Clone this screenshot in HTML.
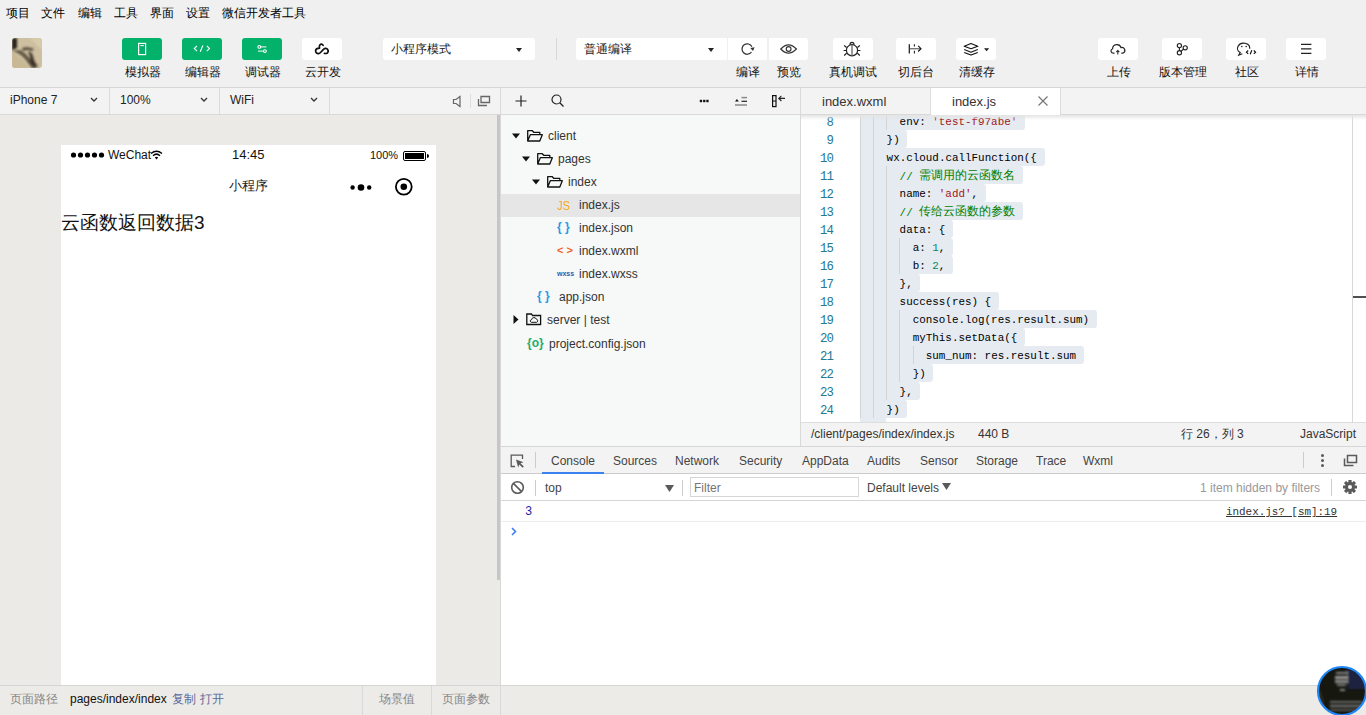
<!DOCTYPE html>
<html><head><meta charset="utf-8">
<style>
*{margin:0;padding:0;box-sizing:border-box}
html,body{width:1366px;height:715px;overflow:hidden;background:#f0f0f0;font-family:"Liberation Sans",sans-serif;color:#222;font-size:12px}
.a{position:absolute}
.t{position:absolute;white-space:nowrap;line-height:1}
/* menu */
#menu .t{top:7px;font-size:12px;color:#000}
/* toolbar */
.btn{position:absolute;top:38px;width:40px;height:22px;border-radius:3px;background:#fff}
.btn.g{background:#02b16a}
.lbl{position:absolute;top:66px;margin-left:1px;font-size:12px;color:#111;white-space:nowrap;line-height:12px;transform:translateX(-50%)}
.sel{position:absolute;top:38px;height:22px;background:#fff;border-radius:3px}
.sel .t{top:5px;left:8px;font-size:12px}
.caret{position:absolute;width:0;height:0;border-left:3px solid transparent;border-right:3px solid transparent;border-top:4px solid #222}
svg{position:absolute;overflow:visible}
</style></head><body>

<!-- MENU -->
<div id="menu">
<span class="t" style="left:6px">项目</span>
<span class="t" style="left:41px">文件</span>
<span class="t" style="left:78px">编辑</span>
<span class="t" style="left:114px">工具</span>
<span class="t" style="left:150px">界面</span>
<span class="t" style="left:186px">设置</span>
<span class="t" style="left:222px">微信开发者工具</span>
</div>

<!-- TOOLBAR -->
<svg style="left:12px;top:38px" width="30" height="30"><defs><clipPath id="avc"><rect width="30" height="30" rx="3"/></clipPath><filter id="bl" x="-50%" y="-50%" width="200%" height="200%"><feGaussianBlur stdDeviation="1.1"/></filter></defs><g clip-path="url(#avc)"><rect width="30" height="30" fill="#cdbf9f"/><g filter="url(#bl)"><path d="M0 0H5V10L0 12Z" fill="#2a241a"/><path d="M0 13Q8 15 13 21Q18 28 20 30H25Q22 26 19 22Q14 15 8 12Z" fill="#4a4030" opacity="0.8"/><path d="M10 10Q16 8 22 11L20 13Q15 11 11 13Z" fill="#3a3024" opacity="0.8"/><path d="M16 14Q19 18 18 24L22 29L26 28Q22 24 21 18Q19 13 16 14Z" fill="#2a2218" opacity="0.85"/><path d="M0 15Q9 19 17 30H0Z" fill="#c8b894"/><path d="M18 0H30V12Q24 6 18 0Z" fill="#ddd2b4" opacity="0.7"/></g></g></svg>

<div class="btn g" style="left:122px"></div>
<div class="btn g" style="left:182px"></div>
<div class="btn g" style="left:242px"></div>
<div class="btn" style="left:302px"></div>
<span class="lbl" style="left:142px">模拟器</span>
<span class="lbl" style="left:202px">编辑器</span>
<span class="lbl" style="left:262px">调试器</span>
<span class="lbl" style="left:322px">云开发</span>

<div class="sel" style="left:383px;width:152px"><span class="t">小程序模式</span><i class="caret" style="left:133px;top:10px"></i></div>
<div class="a" style="left:556px;top:38px;width:1px;height:22px;background:#d8d8d8"></div>
<div class="sel" style="left:576px;width:151px;border-radius:3px 0 0 3px"><span class="t">普通编译</span><i class="caret" style="left:132px;top:10px"></i></div>
<div class="btn" style="left:728px;width:39px;border-radius:0"></div>
<div class="btn" style="left:769px;width:39px;border-radius:0 3px 3px 0"></div>
<span class="lbl" style="left:747px">编译</span>
<span class="lbl" style="left:788px">预览</span>
<div class="btn" style="left:833px"></div>
<div class="btn" style="left:896px"></div>
<div class="btn" style="left:956px"></div>
<span class="lbl" style="left:852px">真机调试</span>
<span class="lbl" style="left:915px">切后台</span>
<span class="lbl" style="left:976px">清缓存</span>

<div class="btn" style="left:1098px"></div>
<div class="btn" style="left:1162px"></div>
<div class="btn" style="left:1226px"></div>
<div class="btn" style="left:1286px"></div>
<span class="lbl" style="left:1118px">上传</span>
<span class="lbl" style="left:1182px">版本管理</span>
<span class="lbl" style="left:1246px">社区</span>
<span class="lbl" style="left:1306px">详情</span>

<div class="a" style="left:0;top:87px;width:1366px;height:1px;background:#d6d6d6"></div>
<svg style="left:0;top:0" width="1366" height="88">
<g fill="none" stroke="#fff" stroke-width="1.2">
<rect x="138.6" y="43.4" width="7" height="11.2"/>
<path d="M140.3 45.6H143.9" stroke-width="1"/>
<path d="M197 45.9L194.3 48.5L197 51.1 M202.9 45.4L200.2 51.7 M206.8 45.9L209.5 48.5L206.8 51.1" stroke-width="1.15"/>
<path d="M260.5 46.9H266.4 M258 51.1H263.5" stroke-width="1.3" stroke-opacity="0.8"/>
<circle cx="259.3" cy="46.9" r="1.4" stroke-width="1.1"/><circle cx="264.9" cy="51.1" r="1.4" stroke-width="1.1"/>
</g>
<path d="M323.1 45.3Q321.5 43.2 319.8 45Q319 46.2 319.5 48.2Q316 48.2 315.6 50.7Q315.8 53.8 318.6 53.6Q319.8 53.4 321 52L323.5 49.3Q325.5 47.5 327.5 49.2Q329 51 327.5 52.8Q326.5 53.8 324.4 53.4" fill="none" stroke="#111" stroke-width="1.7" stroke-linecap="round" stroke-linejoin="round"/>
<g fill="none" stroke="#333" stroke-width="1.2">
<path d="M751.5 52A5.2 5.2 0 1 1 751.9 46.8" stroke-width="1.25"/>
</g>
<path d="M750.3 47.9L754.6 47.3L753 50.9Z" fill="#333"/>
<g fill="none" stroke="#333" stroke-width="1.2">
<path d="M780.8 49Q788.5 40.8 796.4 49Q788.5 57.2 780.8 49Z"/>
<circle cx="788.6" cy="49" r="2.4" stroke-width="1.15"/>
</g>
<g fill="none" stroke="#222" stroke-width="1.2">
<ellipse cx="852" cy="50.3" rx="5.6" ry="5.6"/>
<path d="M850 44.8Q850 42.3 852 42.3Q854 42.3 854 44.8" />
<path d="M852 45V55.8" stroke="#666" stroke-width="1.3"/>
<path d="M846.6 47.5L844.2 45.5 M846.4 50.5H843.6 M846.6 53.2L844.2 55.5 M857.4 47.5L859.8 45.5 M857.6 50.5H860.4 M857.4 53.2L859.8 55.5"/>
</g>
<path d="M909.3 44.2V53.6" stroke="#111" stroke-width="1.2"/>
<path d="M914.4 44.2V46.6M914.4 50.8V53.6" stroke="#222" stroke-width="1.1"/>
<path d="M909.8 48.7H920.3" stroke="#777" stroke-width="1.4"/>
<path d="M918.2 45.9L921 48.7L918.2 51.5" fill="none" stroke="#111" stroke-width="1.1"/>
<g fill="none" stroke="#111" stroke-width="1.1" stroke-linejoin="round">
<path d="M964.2 46.2L971 43.6L977.8 46.2L971 48.8Z"/>
<path d="M964.2 49.6L971 52.2L977.8 49.6"/>
<path d="M964.2 52.5L971 55.1L977.8 52.5"/>
</g>
<path d="M984 48.3H989.2L986.6 51.3Z" fill="#222"/>
<g fill="none" stroke="#222" stroke-width="1.4">
<path d="M1114.5 53.2H1113.2A2.3 2.3 0 0 1 1112.6 48.7A4.3 4.3 0 0 1 1121 47.6A2.9 2.9 0 0 1 1122.8 53.2H1121.3" stroke-width="1.2"/>
</g>
<path d="M1117.8 54.5V50.6M1116.3 52L1117.8 50.5L1119.3 52" fill="none" stroke="#333" stroke-width="1.1"/>
<g fill="none" stroke="#222" stroke-width="1.15">
<circle cx="1179.4" cy="45.6" r="2.1"/><circle cx="1179.4" cy="52.7" r="2.1"/><circle cx="1185.2" cy="47.8" r="2.1"/>
<path d="M1179.4 47.7V50.6 M1183.5 49.3L1180.9 51.3"/>
</g>
<g fill="none" stroke="#222" stroke-width="1.2">
<path d="M1249.7 48.7A6.1 5.2 0 1 0 1240.2 52.6L1238.8 55.2L1242.3 53.8"/>
</g>
<circle cx="1241.8" cy="46.5" r="0.8" fill="#222"/><circle cx="1246.2" cy="46.5" r="0.8" fill="#222"/>
<path d="M1248.2 50.5L1246.4 52.2L1248.2 53.9 M1251.8 50.2L1250.2 54.2 M1253.8 50.5L1255.6 52.2L1253.8 53.9" fill="none" stroke="#111" stroke-width="1.15"/>
<path d="M1301 44.3H1311.4M1301 48.8H1311.4M1301 53.4H1311.4" stroke="#222" stroke-width="1.3"/>
</svg>

<!-- ROW2 -->
<div class="a" style="left:0;top:88px;width:1366px;height:26px;background:#f3f3f3"></div>
<div class="a" style="left:0;top:114px;width:1366px;height:1px;background:#d9d9d9"></div>
<span class="t" style="left:10px;top:94px;font-size:12px">iPhone 7</span>
<span class="t" style="left:120px;top:94px;font-size:12px">100%</span>
<span class="t" style="left:230px;top:94px;font-size:12px">WiFi</span>
<svg style="left:90px;top:97px" width="8" height="5"><path d="M1 1L4 4L7 1" fill="none" stroke="#333" stroke-width="1.3"/></svg>
<svg style="left:200px;top:97px" width="8" height="5"><path d="M1 1L4 4L7 1" fill="none" stroke="#333" stroke-width="1.3"/></svg>
<svg style="left:310px;top:97px" width="8" height="5"><path d="M1 1L4 4L7 1" fill="none" stroke="#333" stroke-width="1.3"/></svg>
<div class="a" style="left:109px;top:88px;width:1px;height:26px;background:#dcdcdc"></div>
<div class="a" style="left:219px;top:88px;width:1px;height:26px;background:#dcdcdc"></div>
<div class="a" style="left:329px;top:88px;width:1px;height:26px;background:#dcdcdc"></div>
<svg style="left:452px;top:95px" width="10" height="13"><path d="M1.5 4.5H4L8 1.5V11.5L4 8.5H1.5Z" fill="none" stroke="#666" stroke-width="1.2"/></svg>
<div class="a" style="left:470px;top:94px;width:1px;height:14px;background:#ddd"></div>
<svg style="left:477px;top:95px" width="14" height="12"><path d="M4 1.5H12.5V7.5H4Z M1.5 4V10.5H10" fill="none" stroke="#666" stroke-width="1.3"/></svg>
<div class="a" style="left:500px;top:88px;width:1px;height:627px;background:#d9d9d9"></div>

<!-- SIMULATOR -->
<div class="a" style="left:0;top:115px;width:500px;height:570px;background:#ebeae7"></div>
<div class="a" style="left:497px;top:115px;width:3px;height:465px;background:#c6c6c6"></div>
<div class="a" style="left:61px;top:145px;width:375px;height:540px;background:#fff"></div>
<!-- status bar -->
<svg style="left:70px;top:151px" width="36" height="8"><circle cx="3.5" cy="4" r="2.6" fill="#000"/><circle cx="10.5" cy="4" r="2.6" fill="#000"/><circle cx="17.5" cy="4" r="2.6" fill="#000"/><circle cx="24.5" cy="4" r="2.6" fill="#000"/><circle cx="31.5" cy="4" r="2.6" fill="#000"/></svg>
<span class="t" style="left:108px;top:149px;font-size:12px;color:#111">WeChat</span>
<svg style="left:150px;top:150px" width="13" height="10"><path d="M1 3.5Q6.5 -1 12 3.5" fill="none" stroke="#000" stroke-width="1.5"/><path d="M3 5.7Q6.5 2.5 10 5.7" fill="none" stroke="#000" stroke-width="1.5"/><path d="M4.8 7.5L6.5 9.5L8.2 7.5Q6.5 6 4.8 7.5Z" fill="#000"/></svg>
<span class="t" style="left:232px;top:148px;font-size:13px;color:#111">14:45</span>
<span class="t" style="left:370px;top:150px;font-size:11px;color:#111">100%</span>
<div class="a" style="left:403px;top:151px;width:23px;height:10px;border:1.3px solid #000;border-radius:2px"></div>
<div class="a" style="left:405px;top:153px;width:19px;height:6px;background:#000"></div>
<div class="a" style="left:426.5px;top:153.5px;width:2.5px;height:4px;background:#000;border-radius:0 2px 2px 0"></div>
<!-- nav -->
<span class="t" style="left:229px;top:179px;font-size:13px;color:#222">小程序</span>
<svg style="left:349px;top:182px" width="24" height="11"><circle cx="3.6" cy="5.5" r="2.2" fill="#000"/><circle cx="12" cy="5.5" r="3.3" fill="#000"/><circle cx="20.2" cy="5.5" r="2.2" fill="#000"/></svg>
<svg style="left:394px;top:177px" width="20" height="20"><circle cx="9.8" cy="9.7" r="7.9" fill="none" stroke="#000" stroke-width="1.8"/><circle cx="9.8" cy="9.7" r="3.3" fill="#000"/></svg>
<span class="t" style="left:61px;top:213px;font-size:19px;color:#111">云函数返回数据3</span>

<!-- FILE TREE -->
<div class="a" style="left:501px;top:115px;width:299px;height:331px;background:#f7f8f8"></div>
<svg style="left:515px;top:95px" width="12" height="12"><path d="M6 0.5V11.5M0.5 6H11.5" stroke="#222" stroke-width="1.2"/></svg>
<svg style="left:551px;top:94px" width="13" height="13"><circle cx="5.5" cy="5.5" r="4.5" fill="none" stroke="#222" stroke-width="1.2"/><path d="M8.8 8.8L12.5 12.5" stroke="#222" stroke-width="1.3"/></svg>
<svg style="left:0;top:0" width="800" height="115">
<rect x="699.8" y="99.8" width="2.3" height="2.4" fill="#111"/><rect x="703.1" y="99.8" width="2.3" height="2.4" fill="#111"/><rect x="706.3" y="99.8" width="2.3" height="2.4" fill="#111"/>
<path d="M735 101.4L736.9 99L738.8 101.4Z" fill="#111"/>
<path d="M741.5 97.6H747" stroke="#888" stroke-width="1.5"/>
<path d="M741.5 101.3H747" stroke="#222" stroke-width="1.2"/>
<path d="M735 105H747" stroke="#888" stroke-width="1.5"/>
<rect x="772.6" y="95.6" width="3.4" height="11" fill="none" stroke="#111" stroke-width="1.2"/>
<path d="M772.6 101H776" stroke="#111" stroke-width="1"/>
<path d="M778.8 98.4H785 M781.4 95.8L778.8 98.4L781.4 101" fill="none" stroke="#222" stroke-width="1.1"/>
</svg>
<div class="a" style="left:800px;top:88px;width:1px;height:358px;background:#d9d9d9"></div>

<div class="a" style="left:501px;top:194px;width:299px;height:23px;background:#e6e6e6"></div>
<svg style="left:512px;top:133px" width="8" height="6"><path d="M0 0.5H8L4 5.5Z" fill="#111"/></svg>
<svg style="left:522px;top:156px" width="8" height="6"><path d="M0 0.5H8L4 5.5Z" fill="#111"/></svg>
<svg style="left:532px;top:179px" width="8" height="6"><path d="M0 0.5H8L4 5.5Z" fill="#111"/></svg>
<svg style="left:513px;top:315px" width="6" height="9"><path d="M0.5 0V9L5.5 4.5Z" fill="#111"/></svg>
<svg style="left:527px;top:130px" width="16" height="12"><path d="M0.7 11V0.7H5.3L6.7 2.3H12.8V4.7 M0.7 11L3.3 4.7H15.3L12.8 11Z" fill="none" stroke="#111" stroke-width="1.3" stroke-linejoin="round"/></svg>
<svg style="left:537px;top:153px" width="16" height="12"><path d="M0.7 11V0.7H5.3L6.7 2.3H12.8V4.7 M0.7 11L3.3 4.7H15.3L12.8 11Z" fill="none" stroke="#111" stroke-width="1.3" stroke-linejoin="round"/></svg>
<svg style="left:547px;top:176px" width="16" height="12"><path d="M0.7 11V0.7H5.3L6.7 2.3H12.8V4.7 M0.7 11L3.3 4.7H15.3L12.8 11Z" fill="none" stroke="#111" stroke-width="1.3" stroke-linejoin="round"/></svg>
<svg style="left:526px;top:313px" width="16" height="13"><path d="M0.8 11.5V1H5.5L6.5 2.5H14.6V11.5Z" fill="none" stroke="#111" stroke-width="1.3"/><path d="M5.2 9.3H10.6A1.6 1.6 0 0 0 10.4 6.2A2.5 2.5 0 0 0 5.6 6.6A1.4 1.4 0 0 0 5.2 9.3Z" fill="none" stroke="#111" stroke-width="1"/></svg>

<span class="t" style="left:548px;top:130px;font-size:12px;color:#333">client</span>
<span class="t" style="left:558px;top:153px;font-size:12px;color:#333">pages</span>
<span class="t" style="left:568px;top:176px;font-size:12px;color:#333">index</span>
<span class="t" style="left:557px;top:199px;font-size:13px;color:#f5a623;transform:scaleX(0.85);transform-origin:left">JS</span>
<span class="t" style="left:579px;top:199px;font-size:12px;color:#333">index.js</span>
<span class="t" style="left:557px;top:221px;font-size:12px;color:#1e9ce6;font-weight:bold">{ }</span>
<span class="t" style="left:579px;top:222px;font-size:12px;color:#333">index.json</span>
<span class="t" style="left:557px;top:245px;font-size:11px;color:#f0642a;font-weight:bold">&lt; &gt;</span>
<span class="t" style="left:579px;top:245px;font-size:12px;color:#333">index.wxml</span>
<span class="t" style="left:557px;top:270px;font-size:7px;color:#1a5fb4;font-weight:bold">wxss</span>
<span class="t" style="left:579px;top:268px;font-size:12px;color:#333">index.wxss</span>
<span class="t" style="left:537px;top:290px;font-size:12px;color:#1e9ce6;font-weight:bold">{ }</span>
<span class="t" style="left:559px;top:291px;font-size:12px;color:#333">app.json</span>
<span class="t" style="left:547px;top:314px;font-size:12px;color:#333">server | test</span>
<span class="t" style="left:527px;top:337px;font-size:12px;color:#1aad6a;font-weight:bold">{o}</span>
<span class="t" style="left:549px;top:338px;font-size:12px;color:#333">project.config.json</span>

<!-- EDITOR TABS -->
<div class="a" style="left:801px;top:88px;width:565px;height:26px;background:#f3f3f3"></div>
<div class="a" style="left:931px;top:88px;width:129px;height:27px;background:#fff"></div>
<div class="a" style="left:930px;top:88px;width:1px;height:26px;background:#ddd"></div>
<div class="a" style="left:1060px;top:88px;width:1px;height:26px;background:#ddd"></div>
<span class="t" style="left:822px;top:95px;font-size:13px;color:#333">index.wxml</span>
<span class="t" style="left:952px;top:95px;font-size:13px;color:#333">index.js</span>
<svg style="left:1038px;top:96px" width="10" height="10"><path d="M0.5 0.5L9.5 9.5M9.5 0.5L0.5 9.5" stroke="#777" stroke-width="1.2"/></svg>

<!-- EDITOR BODY -->
<style>
#ed{position:absolute;left:801px;top:115px;width:565px;height:307px;background:#fff;overflow:hidden}
#ed .in{position:absolute;left:-801px;top:-115px;width:1366px;height:715px}
.sel2{position:absolute;left:860px;height:18px;background:#e5ebf1;border-radius:0 3px 3px 0}
.gd{position:absolute;width:1px;height:18px;background:#d3d3d3}
.ln{position:absolute;left:803px;width:30px;text-align:right;font-family:"Liberation Mono",monospace;font-size:12.3px;letter-spacing:-0.9px;line-height:18px;margin-top:1.5px;color:#237893;white-space:nowrap}
.cd{position:absolute;font-family:"Liberation Mono",monospace;font-size:10.9px;line-height:18px;color:#000;white-space:pre}
.cd b{font-weight:normal}
.cd .s{color:#a31515}.cd .n{color:#098658}.cd .c{color:#008000}
.cd .cj{font-size:12px;font-family:"Liberation Sans",sans-serif;position:relative;top:-1px}
</style>
<div id="ed"><div class="in">
<div class="sel2" style="top:112px;width:165.0px"></div>
<div class="sel2" style="top:130px;width:47.3px"></div>
<div class="sel2" style="top:148px;width:184.6px"></div>
<div class="sel2" style="top:166px;width:162.9px"></div>
<div class="sel2" style="top:184px;width:125.8px"></div>
<div class="sel2" style="top:202px;width:162.9px"></div>
<div class="sel2" style="top:220px;width:93.1px"></div>
<div class="sel2" style="top:238px;width:93.1px"></div>
<div class="sel2" style="top:256px;width:93.1px"></div>
<div class="sel2" style="top:274px;width:60.4px"></div>
<div class="sel2" style="top:292px;width:138.8px"></div>
<div class="sel2" style="top:310px;width:236.9px"></div>
<div class="sel2" style="top:328px;width:165.0px"></div>
<div class="sel2" style="top:346px;width:223.9px"></div>
<div class="sel2" style="top:364px;width:73.4px"></div>
<div class="sel2" style="top:382px;width:60.4px"></div>
<div class="sel2" style="top:400px;width:47.3px"></div>
<div class="a" style="left:860px;top:418px;width:26px;height:4px;background:#e5ebf1"></div>
<div class="gd" style="left:860px;top:112px"></div>
<div class="gd" style="left:873px;top:112px"></div>
<div class="gd" style="left:886px;top:112px"></div>
<div class="gd" style="left:860px;top:130px"></div>
<div class="gd" style="left:873px;top:130px"></div>
<div class="gd" style="left:860px;top:148px"></div>
<div class="gd" style="left:873px;top:148px"></div>
<div class="gd" style="left:860px;top:166px"></div>
<div class="gd" style="left:873px;top:166px"></div>
<div class="gd" style="left:886px;top:166px"></div>
<div class="gd" style="left:860px;top:184px"></div>
<div class="gd" style="left:873px;top:184px"></div>
<div class="gd" style="left:886px;top:184px"></div>
<div class="gd" style="left:860px;top:202px"></div>
<div class="gd" style="left:873px;top:202px"></div>
<div class="gd" style="left:886px;top:202px"></div>
<div class="gd" style="left:860px;top:220px"></div>
<div class="gd" style="left:873px;top:220px"></div>
<div class="gd" style="left:886px;top:220px"></div>
<div class="gd" style="left:860px;top:238px"></div>
<div class="gd" style="left:873px;top:238px"></div>
<div class="gd" style="left:886px;top:238px"></div>
<div class="gd" style="left:899px;top:238px"></div>
<div class="gd" style="left:860px;top:256px"></div>
<div class="gd" style="left:873px;top:256px"></div>
<div class="gd" style="left:886px;top:256px"></div>
<div class="gd" style="left:899px;top:256px"></div>
<div class="gd" style="left:860px;top:274px"></div>
<div class="gd" style="left:873px;top:274px"></div>
<div class="gd" style="left:886px;top:274px"></div>
<div class="gd" style="left:860px;top:292px"></div>
<div class="gd" style="left:873px;top:292px"></div>
<div class="gd" style="left:886px;top:292px"></div>
<div class="gd" style="left:860px;top:310px"></div>
<div class="gd" style="left:873px;top:310px"></div>
<div class="gd" style="left:886px;top:310px"></div>
<div class="gd" style="left:899px;top:310px"></div>
<div class="gd" style="left:860px;top:328px"></div>
<div class="gd" style="left:873px;top:328px"></div>
<div class="gd" style="left:886px;top:328px"></div>
<div class="gd" style="left:899px;top:328px"></div>
<div class="gd" style="left:860px;top:346px"></div>
<div class="gd" style="left:873px;top:346px"></div>
<div class="gd" style="left:886px;top:346px"></div>
<div class="gd" style="left:899px;top:346px"></div>
<div class="gd" style="left:913px;top:346px"></div>
<div class="gd" style="left:860px;top:364px"></div>
<div class="gd" style="left:873px;top:364px"></div>
<div class="gd" style="left:886px;top:364px"></div>
<div class="gd" style="left:899px;top:364px"></div>
<div class="gd" style="left:860px;top:382px"></div>
<div class="gd" style="left:873px;top:382px"></div>
<div class="gd" style="left:886px;top:382px"></div>
<div class="gd" style="left:860px;top:400px"></div>
<div class="gd" style="left:873px;top:400px"></div>
<span class="ln" style="top:112px">8</span>
<span class="cd" style="top:113px;left:899.6px">env: <b class="s">'test-f97abe'</b></span>
<span class="ln" style="top:130px">9</span>
<span class="cd" style="top:131px;left:886.6px">})</span>
<span class="ln" style="top:148px">10</span>
<span class="cd" style="top:149px;left:886.6px">wx.cloud.callFunction({</span>
<span class="ln" style="top:166px">11</span>
<span class="cd" style="top:167px;left:899.6px"><b class="c">// </b><b class="c cj">需调用的云函数名</b></span>
<span class="ln" style="top:184px">12</span>
<span class="cd" style="top:185px;left:899.6px">name: <b class="s">'add'</b>,</span>
<span class="ln" style="top:202px">13</span>
<span class="cd" style="top:203px;left:899.6px"><b class="c">// </b><b class="c cj">传给云函数的参数</b></span>
<span class="ln" style="top:220px">14</span>
<span class="cd" style="top:221px;left:899.6px">data: {</span>
<span class="ln" style="top:238px">15</span>
<span class="cd" style="top:239px;left:912.7px">a: <b class="n">1</b>,</span>
<span class="ln" style="top:256px">16</span>
<span class="cd" style="top:257px;left:912.7px">b: <b class="n">2</b>,</span>
<span class="ln" style="top:274px">17</span>
<span class="cd" style="top:275px;left:899.6px">},</span>
<span class="ln" style="top:292px">18</span>
<span class="cd" style="top:293px;left:899.6px">success(res) {</span>
<span class="ln" style="top:310px">19</span>
<span class="cd" style="top:311px;left:912.7px">console.log(res.result.sum)</span>
<span class="ln" style="top:328px">20</span>
<span class="cd" style="top:329px;left:912.7px">myThis.setData({</span>
<span class="ln" style="top:346px">21</span>
<span class="cd" style="top:347px;left:925.8px">sum_num: res.result.sum</span>
<span class="ln" style="top:364px">22</span>
<span class="cd" style="top:365px;left:912.7px">})</span>
<span class="ln" style="top:382px">23</span>
<span class="cd" style="top:383px;left:899.6px">},</span>
<span class="ln" style="top:400px">24</span>
<span class="cd" style="top:401px;left:886.6px">})</span>

</div>
<div class="a" style="left:551px;top:0;width:1px;height:307px;background:#d8d8d8"></div>
<div class="a" style="left:552px;top:181px;width:13px;height:2px;background:#505050"></div>
<div class="a" style="left:0;top:0;width:565px;height:5px;background:linear-gradient(#e4e4e4,rgba(255,255,255,0))"></div>
</div>
<!-- EDITOR STATUS -->
<div class="a" style="left:801px;top:422px;width:565px;height:24px;background:#f3f3f3;border-top:1px solid #dedede"></div>
<span class="t" style="left:811px;top:428px;font-size:12px;color:#333">/client/pages/index/index.js</span>
<span class="t" style="left:978px;top:428px;font-size:12px;color:#333">440 B</span>
<span class="t" style="left:1181px;top:428px;font-size:12px;color:#333">行 26，列 3</span>
<span class="t" style="left:1300px;top:428px;font-size:12px;color:#333">JavaScript</span>
<div class="a" style="left:501px;top:446px;width:865px;height:1px;background:#d6d6d6"></div>

<!-- DEVTOOLS -->
<div class="a" style="left:501px;top:447px;width:865px;height:26px;background:#f3f3f3"></div>
<div class="a" style="left:501px;top:473px;width:865px;height:1px;background:#cccccc"></div>
<div class="a" style="left:501px;top:474px;width:865px;height:241px;background:#fff"></div>
<svg style="left:510px;top:454px" width="15" height="14"><path d="M5 12.5H1.2V1.2H12.5V5" fill="none" stroke="#5a5a5a" stroke-width="1.3"/><path d="M6 5.5L13.5 8.2L10.5 9.3L13.8 12.6L12.6 13.8L9.3 10.5L8.2 13.5Z" fill="#5a5a5a"/></svg>
<div class="a" style="left:535px;top:452px;width:1px;height:16px;background:#ccc"></div>
<span class="t dt" style="left:551px">Console</span>
<div class="a" style="left:542px;top:472px;width:62px;height:2px;background:#3b82f0"></div>
<span class="t dt" style="left:613px">Sources</span>
<span class="t dt" style="left:675px">Network</span>
<span class="t dt" style="left:739px">Security</span>
<span class="t dt" style="left:802px">AppData</span>
<span class="t dt" style="left:867px">Audits</span>
<span class="t dt" style="left:920px">Sensor</span>
<span class="t dt" style="left:976px">Storage</span>
<span class="t dt" style="left:1036px">Trace</span>
<span class="t dt" style="left:1083px">Wxml</span>
<div class="a" style="left:1303px;top:452px;width:1px;height:16px;background:#ccc"></div>
<svg style="left:1320px;top:453px" width="5" height="15"><circle cx="2.5" cy="2.5" r="1.5" fill="#5a5a5a"/><circle cx="2.5" cy="7.5" r="1.5" fill="#5a5a5a"/><circle cx="2.5" cy="12.5" r="1.5" fill="#5a5a5a"/></svg>
<svg style="left:1343px;top:454px" width="15" height="13"><path d="M4.5 1.5H13.5V8.5H4.5Z M1.5 4.5V11.5H10.5" fill="none" stroke="#5a5a5a" stroke-width="1.5"/></svg>

<svg style="left:510px;top:480px" width="15" height="15"><circle cx="7.5" cy="7.5" r="5.8" fill="none" stroke="#5a5a5a" stroke-width="1.6"/><path d="M3.4 3.4L11.6 11.6" stroke="#5a5a5a" stroke-width="1.6"/></svg>
<div class="a" style="left:535px;top:480px;width:1px;height:16px;background:#ccc"></div>
<span class="t dt" style="left:545px;top:482px">top</span>
<svg style="left:665px;top:485px" width="9" height="7"><path d="M0 0H9L4.5 7Z" fill="#5a5a5a"/></svg>
<div class="a" style="left:682px;top:480px;width:1px;height:16px;background:#ccc"></div>
<div class="a" style="left:690px;top:477px;width:169px;height:20px;border:1px solid #d6d6d6"></div>
<span class="t dt" style="left:694px;top:482px;color:#757575">Filter</span>
<span class="t dt" style="left:867px;top:482px">Default levels</span>
<svg style="left:942px;top:483px" width="9" height="7"><path d="M0 0H9L4.5 7Z" fill="#5a5a5a"/></svg>
<span class="t dt" style="left:1200px;top:482px;color:#999">1 item hidden by filters</span>
<div class="a" style="left:1331px;top:479px;width:1px;height:17px;background:#ccc"></div>
<svg style="left:1343px;top:480px" width="14" height="14" viewBox="0 0 14 14"><g transform="translate(7 7)" fill="#5a5a5a"><rect x="-1.6" y="-7" width="3.2" height="3.5" rx="0.5" transform="rotate(0)"/><rect x="-1.6" y="-7" width="3.2" height="3.5" rx="0.5" transform="rotate(45)"/><rect x="-1.6" y="-7" width="3.2" height="3.5" rx="0.5" transform="rotate(90)"/><rect x="-1.6" y="-7" width="3.2" height="3.5" rx="0.5" transform="rotate(135)"/><rect x="-1.6" y="-7" width="3.2" height="3.5" rx="0.5" transform="rotate(180)"/><rect x="-1.6" y="-7" width="3.2" height="3.5" rx="0.5" transform="rotate(225)"/><rect x="-1.6" y="-7" width="3.2" height="3.5" rx="0.5" transform="rotate(270)"/><rect x="-1.6" y="-7" width="3.2" height="3.5" rx="0.5" transform="rotate(315)"/><circle r="5"/></g><circle cx="7" cy="7" r="2" fill="#fff"/></svg>
<div class="a" style="left:501px;top:500px;width:865px;height:1px;background:#d6d6d6"></div>
<span class="t" style="left:525px;top:506px;font-family:'Liberation Mono',monospace;font-size:12px;color:#1a1aa6">3</span>
<span class="t" style="left:1226px;top:507px;font-family:'Liberation Mono',monospace;font-size:10.9px;color:#333;text-decoration:underline">index.js? [sm]:19</span>
<div class="a" style="left:501px;top:521px;width:865px;height:1px;background:#ececec"></div>
<svg style="left:511px;top:527px" width="6" height="9"><path d="M1 1L4.5 4.5L1 8" fill="none" stroke="#367cf1" stroke-width="1.5"/></svg>

<!-- bottom bar full width -->
<div class="a" style="left:0;top:685px;width:1366px;height:1px;background:#d5d5d5"></div>
<div class="a" style="left:0;top:686px;width:1366px;height:29px;background:#ecebe8"></div>
<div class="a" style="left:500px;top:686px;width:1px;height:29px;background:#d9d9d9"></div>
<!-- bottom status -->

<span class="t" style="left:10px;top:693px;font-size:12px;color:#888">页面路径</span>
<span class="t" style="left:70px;top:693px;font-size:12px;color:#111">pages/index/index</span>
<span class="t" style="left:172px;top:693px;font-size:12px;color:#5a6a9a">复制</span>
<span class="t" style="left:200px;top:693px;font-size:12px;color:#5a6a9a">打开</span>
<div class="a" style="left:362px;top:686px;width:1px;height:29px;background:#d9d9d9"></div>
<div class="a" style="left:431px;top:686px;width:1px;height:29px;background:#d9d9d9"></div>
<span class="t" style="left:379px;top:693px;font-size:12px;color:#888">场景值</span>
<span class="t" style="left:442px;top:693px;font-size:12px;color:#888">页面参数</span>

<!-- floating avatar -->
<svg style="left:1316px;top:665px" width="52" height="52"><defs><clipPath id="fac"><circle cx="26" cy="26" r="24"/></clipPath><filter id="bl2"><feGaussianBlur stdDeviation="0.8"/></filter></defs><g clip-path="url(#fac)"><rect width="52" height="52" fill="#16170f"/><g filter="url(#bl2)"><path d="M30 4H52V24H32Z" fill="#1c2040"/><path d="M2 22Q8 30 10 52H0V22Z" fill="#3a3020" opacity="0.8"/><rect x="20" y="7" width="12" height="2" fill="#8a8a8a"/><rect x="19" y="11" width="13" height="3" fill="#9a9a9a"/><rect x="19" y="15" width="13" height="3" fill="#8a8a8a"/><rect x="21" y="19" width="9" height="2" fill="#7a7a7a"/><rect x="24" y="24" width="5" height="2" fill="#8a8a8a"/><rect x="14" y="36" width="32" height="2" fill="#6a6a6a"/><rect x="14" y="40" width="34" height="2" fill="#7a7a7a"/><rect x="14" y="44" width="30" height="2" fill="#5a5a5a"/></g></g><circle cx="26" cy="26" r="24" fill="none" stroke="#1f86f8" stroke-width="2.2"/></svg>
<style>.dt{top:455px;font-size:12px;color:#444}</style>

</body></html>
